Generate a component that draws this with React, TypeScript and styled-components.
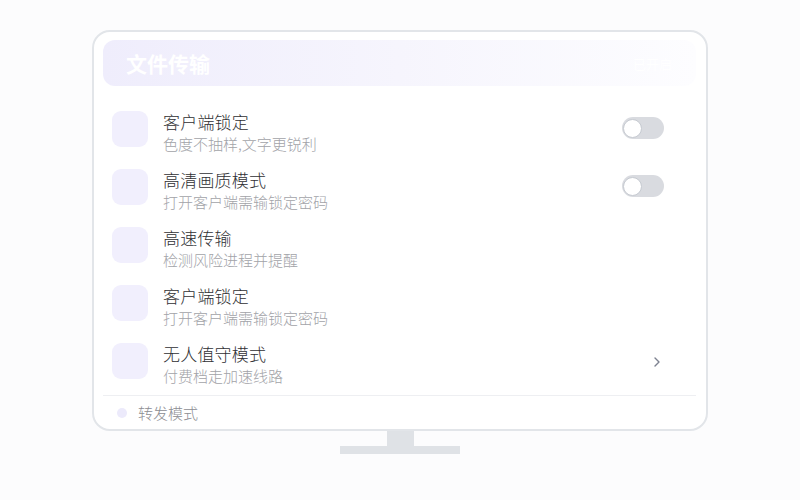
import React from "react";
import styled, { createGlobalStyle } from "styled-components";

const Global = createGlobalStyle`
  html, body { margin: 0; padding: 0; background: #fcfcfd; }
  body { font-family: "Noto Sans CJK SC", "Noto Sans", sans-serif; }
`;

const Page = styled.div`
  width: 800px;
  height: 500px;
  display: flex;
  flex-direction: column;
  align-items: center;
  padding-top: 30px;
  box-sizing: border-box;
`;

const Screen = styled.div`
  width: 616px;
  height: 401px;
  box-sizing: border-box;
  border: 2px solid #e2e5e9;
  border-radius: 18px;
  background: #ffffff;
  padding: 8px 10px 0 9px;
  display: flex;
  flex-direction: column;
`;

const Header = styled.div`
  height: 47px;
  border-radius: 12px;
  background: linear-gradient(90deg, #efedfc 0%, #f6f5fd 50%, #fdfdff 100%);
  display: flex;
  align-items: center;
  justify-content: space-between;
  padding: 0 24px 0 23px;
`;

const Title = styled.div`
  color: #ffffff;
  font-size: 21px;
  font-weight: 700;
`;

const HeaderNote = styled.div`
  color: #ffffff;
  font-size: 13px;
`;

const List = styled.div`
  margin-top: 14px;
  display: flex;
  flex-direction: column;
`;

const Row = styled.div`
  height: 58px;
  display: flex;
  align-items: center;
  padding: 0 32px 0 9px;
`;

const IconBox = styled.div`
  width: 36px;
  height: 36px;
  border-radius: 9px;
  background: #f1effd;
  flex: none;
`;

const Texts = styled.div`
  margin-left: 15px;
  flex: 1;
  display: flex;
  flex-direction: column;
  margin-top: 6px;
`;

const RowTitle = styled.div`
  font-size: 17px;
  line-height: 22px;
  color: #2f3033;
  font-weight: 300;
  letter-spacing: 0.2px;
`;

const RowSub = styled.div`
  font-size: 15px;
  line-height: 21px;
  color: #a2a3a8;
  font-weight: 300;
`;

const Toggle = styled.div`
  width: 42px;
  height: 22px;
  border-radius: 11px;
  background: #d9dbe0;
  display: flex;
  align-items: center;
  padding-left: 1px;
  box-sizing: border-box;
  margin-top: -2px;
`;

const Knob = styled.div`
  width: 19px;
  height: 19px;
  border-radius: 50%;
  background: #fff;
  border: 1px solid #c6cad1;
  box-sizing: border-box;
`;

const Chevron = styled.svg`
  width: 10px;
  height: 12px;
  margin-right: 2px;
  margin-top: 2px;
`;

const Divider = styled.div`
  height: 1px;
  background: #eeeff2;
  margin-top: 5px;
`;

const Footer = styled.div`
  height: 33px;
  display: flex;
  align-items: center;
  padding-left: 14px;
`;

const Dot = styled.div`
  width: 10px;
  height: 10px;
  border-radius: 50%;
  background: #eceafb;
`;

const FooterText = styled.div`
  margin-left: 11px;
  font-size: 15px;
  font-weight: 300;
  color: #8c8d92;
`;

const Neck = styled.div`
  width: 27px;
  height: 15px;
  background: #dfe2e6;
`;

const Base = styled.div`
  width: 120px;
  height: 8px;
  background: #dfe2e6;
`;

type Item = { title: string; sub: string; action: "toggle" | "chevron" | "none" };

const items: Item[] = [
  { title: "客户端锁定", sub: "色度不抽样,文字更锐利", action: "toggle" },
  { title: "高清画质模式", sub: "打开客户端需输锁定密码", action: "toggle" },
  { title: "高速传输", sub: "检测风险进程并提醒", action: "none" },
  { title: "客户端锁定", sub: "打开客户端需输锁定密码", action: "none" },
  { title: "无人值守模式", sub: "付费档走加速线路", action: "chevron" },
];

export default function App() {
  return (
    <Page>
      <Global />
      <Screen>
        <Header>
          <Title>文件传输</Title>
          <HeaderNote>已开启</HeaderNote>
        </Header>
        <List>
          {items.map((it, i) => (
            <Row key={i}>
              <IconBox />
              <Texts>
                <RowTitle>{it.title}</RowTitle>
                <RowSub>{it.sub}</RowSub>
              </Texts>
              {it.action === "toggle" && (
                <Toggle>
                  <Knob />
                </Toggle>
              )}
              {it.action === "chevron" && (
                <Chevron viewBox="0 0 10 12">
                  <path d="M3 2 L7 6 L3 10" fill="none" stroke="#7d8290" strokeWidth="1.4" strokeLinecap="round" strokeLinejoin="round" />
                </Chevron>
              )}
            </Row>
          ))}
        </List>
        <Divider />
        <Footer>
          <Dot />
          <FooterText>转发模式</FooterText>
        </Footer>
      </Screen>
      <Neck />
      <Base />
    </Page>
  );
}
